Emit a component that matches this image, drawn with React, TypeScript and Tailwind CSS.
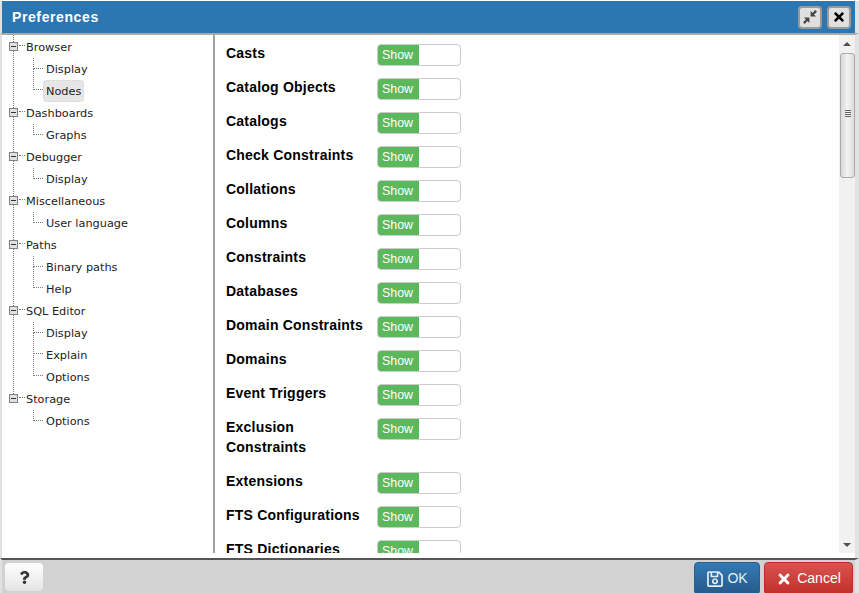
import { FaRegSave, FaTimes, FaQuestion } from 'react-icons/fa';

const tree = [
  { name: 'Browser', children: ['Display', 'Nodes'] },
  { name: 'Dashboards', children: ['Graphs'] },
  { name: 'Debugger', children: ['Display'] },
  { name: 'Miscellaneous', children: ['User language'] },
  { name: 'Paths', children: ['Binary paths', 'Help'] },
  { name: 'SQL Editor', children: ['Display', 'Explain', 'Options'] },
  { name: 'Storage', children: ['Options'] },
];

const nodes = [
  'Casts',
  'Catalog Objects',
  'Catalogs',
  'Check Constraints',
  'Collations',
  'Columns',
  'Constraints',
  'Databases',
  'Domain Constraints',
  'Domains',
  'Event Triggers',
  'Exclusion Constraints',
  'Extensions',
  'FTS Configurations',
  'FTS Dictionaries',
];

const TreeGroup = ({ name, children, last }: { name: string; children: string[]; last: boolean }) => {
  return (
    <div className="relative">
      {!last && <div className="absolute left-[11px] -top-px bottom-0 border-l border-dotted border-[#777]" />}
      {last && <div className="absolute left-[11px] -top-px h-[7px] border-l border-dotted border-[#777]" />}
      <div className="relative flex h-[22px] items-start">
        <div className="ml-[7px] mt-[6px] flex h-[9px] w-[9px] items-center justify-center border border-[#808080] bg-[#e0e0e0]">
          <div className="h-px w-[5px] bg-[#334]" />
        </div>
        <div className="ml-px mt-[9px] w-[6px] border-t border-dotted border-[#777]" />
        <span className="ml-px flex h-[22px] items-center pt-[2px]">{name}</span>
      </div>
      {children.map((child, i) => (
        <div key={child} className="relative flex h-[22px] items-start pl-[41px]">
          <div
            className={`absolute left-[31px] w-[10px] border-b border-l border-dotted border-[#777] ${
              i === 0 ? 'top-0 h-[11px]' : 'top-[-11px] h-[21px]'
            }`}
          />
          <span
            className={`flex h-[22px] items-center border px-[2px] pt-[2px] ${
              child === 'Nodes' && name === 'Browser'
                ? 'rounded-[4px] border-dashed border-[#d8d8d8] bg-[#e6e6e6]'
                : 'border-transparent'
            }`}
          >
            {child}
          </span>
        </div>
      ))}
    </div>
  );
};

const ShowToggle = () => {
  return (
    <div className="mt-px flex h-[22px] w-[84px] shrink-0 overflow-hidden rounded-[4px] border border-[#ccc] bg-white">
      <div className="flex w-[41px] items-center bg-[#5cb85c] pl-[4px] text-[12.4px] text-white">Show</div>
    </div>
  );
};

const App = () => {
  return (
    <div className="flex h-[593px] w-[859px] flex-col overflow-hidden bg-white pt-px font-['Liberation_Sans',sans-serif] text-black">
      <div className="flex h-[32px] shrink-0 items-center justify-between border-l-2 border-r-4 border-[#e1e1e1] bg-[#2c76b2] pl-[10px] pr-[4px]">
        <span className="text-[14px] font-bold tracking-[0.6px] text-white">Preferences</span>
        <div className="flex gap-[5px]">
          <button className="flex h-[23px] w-[24px] items-center justify-center rounded-[4px] border-2 border-[#9a9a9a] bg-[#e0e0e0]">
            <svg viewBox="0 0 16 16" width="16" height="16" fill="#444">
              <path d="M8.6 7.4V2l2 2L13.2 1 15 2.8 12 5.4l2 2z" />
              <path d="M7.4 8.6V14l-2-2L2.8 15 1 13.2 4 10.6l-2-2z" />
            </svg>
          </button>
          <button className="flex h-[23px] w-[24px] items-center justify-center rounded-[4px] border-2 border-[#9a9a9a] bg-[#e0e0e0] text-black">
            <FaTimes size={14} />
          </button>
        </div>
      </div>
      <div className="flex min-h-0 flex-1 items-start border-l-2 border-r-4 border-t-2 border-[#e1e1e1] border-t-[#a9a9a9]">
        <div className="flex h-[518px] w-[213px] shrink-0 flex-col border-r-2 border-[#a0a0a0] font-['DejaVu_Sans',sans-serif] text-[11.3px] text-[#222]">
          <div className="w-[211px] pt-px">
            {tree.map((group, i) => (
              <TreeGroup key={group.name} name={group.name} children={group.children} last={i === tree.length - 1} />
            ))}
          </div>
        </div>
        <div className="h-[518px] min-w-0 flex-1 overflow-hidden pl-[11px] pt-[8px]">
          {nodes.map((node) => (
            <div key={node} className="mb-[10px] flex items-start">
              <div className="w-[151px] pb-[4px] text-[14px] font-bold leading-[20px] tracking-[0.22px]">{node}</div>
              <ShowToggle />
            </div>
          ))}
        </div>
        <div className="flex h-[518px] w-[16px] shrink-0 flex-col items-center bg-[#f1f1f1]">
          <div className="mt-[7px] h-0 w-0 border-x-[4px] border-b-[4px] border-x-transparent border-b-[#505050]" />
          <div className="relative mt-[7px] h-[125px] w-[15px] rounded-[3px] border border-[#aaa] bg-gradient-to-r from-[#d8d8d8] via-[#f2f2f2] to-[#dcdcdc]">
            <div className="absolute left-[4px] top-[56px] flex flex-col gap-px">
              <div className="h-px w-[6px] bg-[#666]" />
              <div className="h-px w-[6px] bg-[#666]" />
              <div className="h-px w-[6px] bg-[#666]" />
              <div className="h-px w-[6px] bg-[#666]" />
            </div>
          </div>
          <div className="mt-auto mb-[6px] h-0 w-0 border-x-[4px] border-t-[4px] border-x-transparent border-t-[#505050]" />
        </div>
      </div>
      <div className="flex h-[35px] shrink-0 items-start justify-between border-l-2 border-r-4 border-t-2 border-[#e1e1e1] border-t-[#555] bg-[#d2d2d2] pt-[2px]">
        <button className="ml-[3px] mt-px flex h-[28px] w-[38px] items-center justify-center rounded-[4px] bg-gradient-to-b from-white to-[#e4e4e4] text-[#333]">
          <FaQuestion size={13} />
        </button>
        <div className="mr-[2px] flex gap-[4px]">
          <button className="flex h-[33px] w-[66px] items-center justify-center gap-[3px] rounded-[4px] border border-[#28608f] bg-gradient-to-b from-[#337ab7] to-[#265a88] text-[14px] text-[#e6eef5]">
            <FaRegSave size={18} />
            OK
          </button>
          <button className="flex h-[33px] w-[89px] items-center justify-center gap-[5px] rounded-[4px] border border-[#b92c28] bg-gradient-to-b from-[#d9534f] to-[#c12e2a] text-[14px] text-white">
            <FaTimes size={16} />
            Cancel
          </button>
        </div>
      </div>
    </div>
  );
};

export default App;
